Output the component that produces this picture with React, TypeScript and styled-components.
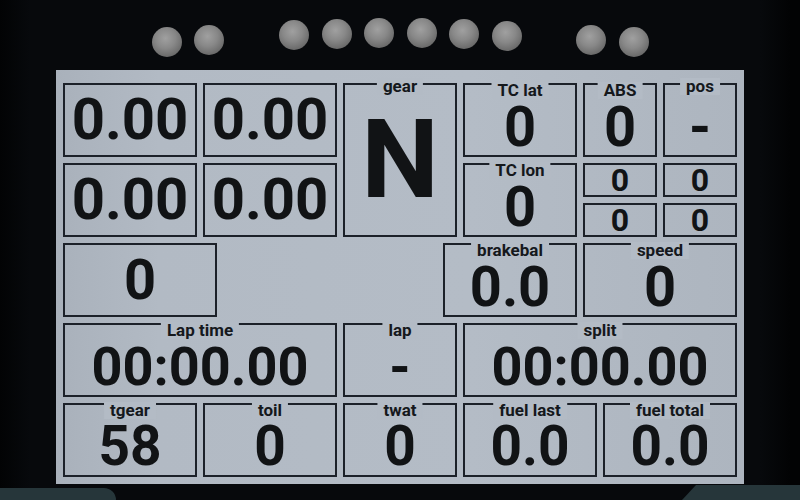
import React from "react";
import styled, { createGlobalStyle } from "styled-components";

const Global = createGlobalStyle`
  html, body { margin: 0; padding: 0; }
  body {
    width: 800px; height: 500px; overflow: hidden;
    background: linear-gradient(to right, #020304 0px, #07090c 30px, #07090c 760px, #020304 790px);
    font-family: Roboto, "Liberation Sans", sans-serif;
  }
`;

const Page = styled.div`
  width: 800px;
  height: 500px;
  display: flex;
  flex-direction: column;
`;

const LedBar = styled.div`
  height: 70px;
  display: flex;
  padding-left: 145.8px;
  box-sizing: border-box;
`;

const Slot = styled.div`
  width: 42.45px;
  display: flex;
  justify-content: center;
  align-items: flex-start;
`;

const Led = styled.div<{ $top: number }>`
  width: 30px;
  height: 30px;
  margin-top: ${(p) => p.$top}px;
  border-radius: 50%;
  background: radial-gradient(circle at 45% 38%, #a0a0a0 0%, #888 40%, #696969 75%, #4a4a4a 100%);
`;

const Screen = styled.div`
  margin-left: 56px;
  width: 688px;
  height: 414px;
  box-sizing: border-box;
  padding: 10px 4px 4px 4px;
  background: linear-gradient(to right, #a9b1bb 0%, #b2bac4 15%, #b4bcc6 60%, #adb5bf 100%);
  display: grid;
  grid-template-columns: repeat(34, 20px);
  grid-template-rows: repeat(10, 40px);
`;

const Box = styled.div<{ $c: number; $s: number; $r: number; $rs: number; $pad: number }>`
  grid-column: ${(p) => p.$c} / span ${(p) => p.$s};
  grid-row: ${(p) => p.$r} / span ${(p) => p.$rs};
  margin: 3px;
  border: 2px solid #1c2129;
  position: relative;
  display: flex;
  align-items: center;
  justify-content: center;
  padding-top: ${(p) => p.$pad}px;
  min-width: 0;
  min-height: 0;
`;

const Label = styled.div<{ $top: number }>`
  position: absolute;
  top: ${(p) => p.$top}px;
  left: 50%;
  transform: translateX(-50%);
  padding: 0 6px;
  background: #b3bbc5;
  color: #15181c;
  font-size: 17px;
  font-weight: 700;
  line-height: 17px;
  white-space: nowrap;
`;

const Value = styled.div<{ $size: number }>`
  font-size: ${(p) => p.$size}px;
  font-weight: 700;
  line-height: 0.75;
  color: #111315;
  white-space: nowrap;
`;

const Footer = styled.div`
  flex: 1;
  display: flex;
  justify-content: space-between;
  align-items: flex-end;
`;

const FootLeft = styled.div`
  width: 116px;
  height: 12px;
  background: #26363a;
  border-top-right-radius: 14px;
`;

const FootRight = styled.div`
  width: 118px;
  height: 15px;
  background: #26363a;
  clip-path: polygon(14px 0, 100% 0, 100% 100%, 0 100%);
`;

type W = {
  c: number; s: number; r: number; rs: number;
  label?: string; value: string; size: number; lt?: number; pad?: number;
};

const widgets: W[] = [
  { c: 1, s: 7, r: 1, rs: 2, value: "0.00", size: 58 },
  { c: 8, s: 7, r: 1, rs: 2, value: "0.00", size: 58 },
  { c: 15, s: 6, r: 1, rs: 4, label: "gear", value: "N", size: 110, lt: -7, pad: 0 },
  { c: 21, s: 6, r: 1, rs: 2, label: "TC lat", value: "0", size: 56 },
  { c: 27, s: 4, r: 1, rs: 2, label: "ABS", value: "0", size: 56 },
  { c: 31, s: 4, r: 1, rs: 2, label: "pos", value: "-", size: 56, lt: -7 },
  { c: 1, s: 7, r: 3, rs: 2, value: "0.00", size: 58 },
  { c: 8, s: 7, r: 3, rs: 2, value: "0.00", size: 58 },
  { c: 21, s: 6, r: 3, rs: 2, label: "TC lon", value: "0", size: 56 },
  { c: 27, s: 4, r: 3, rs: 1, value: "0", size: 32 },
  { c: 31, s: 4, r: 3, rs: 1, value: "0", size: 32 },
  { c: 27, s: 4, r: 4, rs: 1, value: "0", size: 32 },
  { c: 31, s: 4, r: 4, rs: 1, value: "0", size: 32 },
  { c: 1, s: 8, r: 5, rs: 2, value: "0", size: 56 },
  { c: 20, s: 7, r: 5, rs: 2, label: "brakebal", value: "0.0", size: 56 },
  { c: 27, s: 8, r: 5, rs: 2, label: "speed", value: "0", size: 56 },
  { c: 1, s: 14, r: 7, rs: 2, label: "Lap time", value: "00:00.00", size: 54 },
  { c: 15, s: 6, r: 7, rs: 2, label: "lap", value: "-", size: 54 },
  { c: 21, s: 14, r: 7, rs: 2, label: "split", value: "00:00.00", size: 54 },
  { c: 1, s: 7, r: 9, rs: 2, label: "tgear", value: "58", size: 55 },
  { c: 8, s: 7, r: 9, rs: 2, label: "toil", value: "0", size: 55 },
  { c: 15, s: 6, r: 9, rs: 2, label: "twat", value: "0", size: 55 },
  { c: 21, s: 7, r: 9, rs: 2, label: "fuel last", value: "0.0", size: 55 },
  { c: 28, s: 7, r: 9, rs: 2, label: "fuel total", value: "0.0", size: 55 },
];

const leds: (number | null)[] = [27, 25, null, 20, 19, 18, 18, 19, 21, null, 25, 27];

export default function App() {
  return (
    <Page>
      <Global />
      <LedBar>
        {leds.map((t, i) => (
          <Slot key={i}>{t !== null && <Led $top={t} />}</Slot>
        ))}
      </LedBar>
      <Screen>
        {widgets.map((w, i) => (
          <Box key={i} $c={w.c} $s={w.s} $r={w.r} $rs={w.rs} $pad={w.pad ?? (w.label ? 14 : 0)}>
            {w.label && <Label $top={w.lt ?? -3}>{w.label}</Label>}
            <Value $size={w.size}>{w.value}</Value>
          </Box>
        ))}
      </Screen>
      <Footer>
        <FootLeft />
        <FootRight />
      </Footer>
    </Page>
  );
}
